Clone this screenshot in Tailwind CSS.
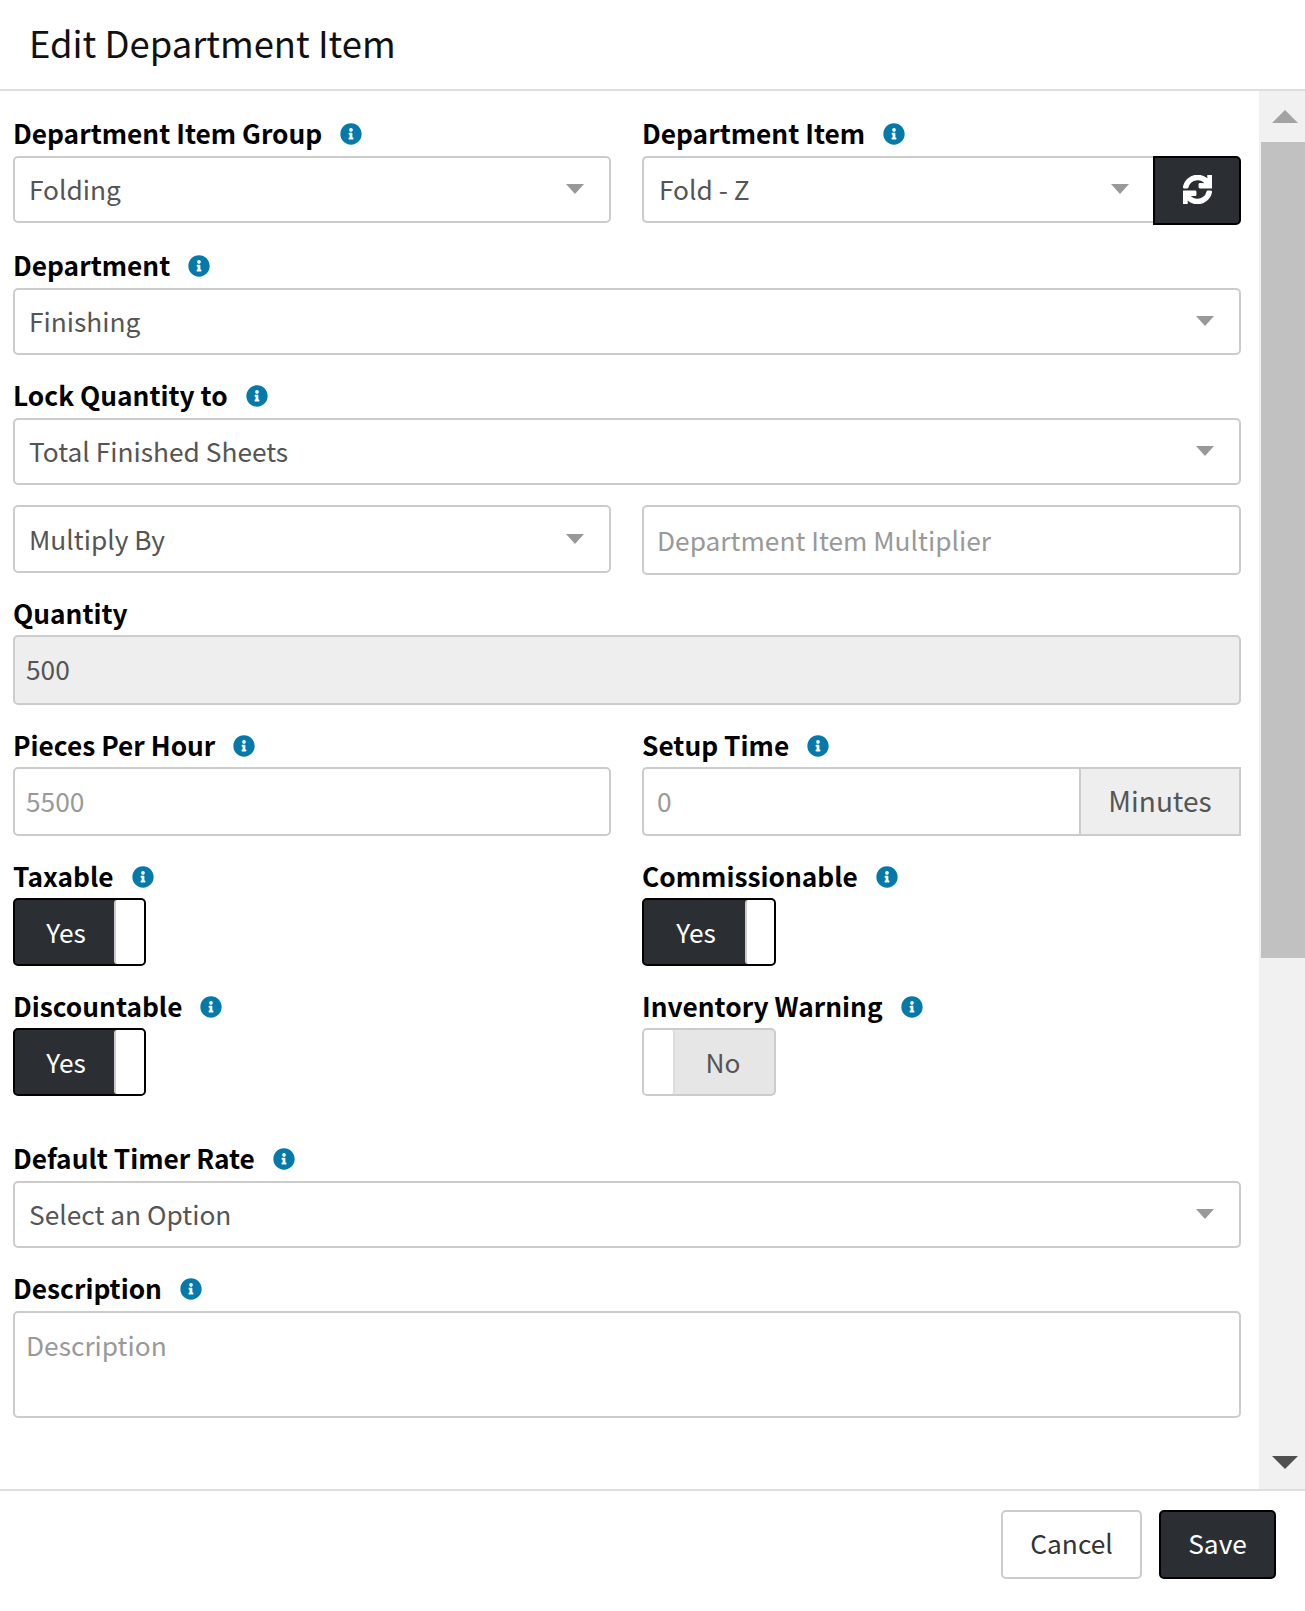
<!DOCTYPE html>
<html lang="en">
<head>
<meta charset="utf-8">
<title>Edit Department Item</title>
<script src="https://cdn.jsdelivr.net/npm/@tailwindcss/browser@4"></script>
</head>
<body class="bg-white font-['Noto_Sans_CJK_SC','Noto_Sans',sans-serif] text-[26.3px] text-black">
<div class="w-[1305px] h-[1611px] flex flex-col overflow-hidden">
  <header class="h-[91px] shrink-0 border-b-2 border-[#dedede] pl-[29px] pb-1 flex items-center">
    <h1 class="text-[36.4px] font-normal leading-none text-[#111]">Edit Department Item</h1>
  </header>
  <div class="flex-1 flex min-h-0 border-b-2 border-[#dedede]">
    <main class="w-[1259px] shrink-0 pl-[13px] pr-[18px] pt-[27px]">
      <div class="grid grid-cols-[598px_599px] gap-x-[31px]">
        <div>
          <div class="h-8 pb-[2px] flex items-center font-bold leading-none">Department Item Group<svg class="ml-[18px] mt-[2px] w-[22px] h-[22px]" viewBox="0 0 512 512" fill="#0679ab"><path d="M256 8C119.043 8 8 119.083 8 256c0 136.997 111.043 248 248 248s248-111.003 248-248C504 119.083 392.957 8 256 8zm0 110c23.196 0 42 18.804 42 42s-18.804 42-42 42-42-18.804-42-42 18.804-42 42-42zm56 254c0 6.627-5.373 12-12 12h-88c-6.627 0-12-5.373-12-12v-24c0-6.627 5.373-12 12-12h12v-64h-12c-6.627 0-12-5.373-12-12v-24c0-6.627 5.373-12 12-12h64c6.627 0 12 5.373 12 12v100h12c6.627 0 12 5.373 12 12v24z"/></svg></div>
          <div class="mt-[6px] h-[67px] border-2 border-[#ccc] rounded-[5px] pl-[14px] pr-[25px] pb-[2px] flex items-center justify-between text-[#555]"><span>Folding</span><span class="w-0 h-0 border-x-[9px] border-x-transparent border-t-[10px] border-t-[#999]"></span></div>
        </div>
        <div>
          <div class="h-8 pb-[2px] flex items-center font-bold leading-none">Department Item<svg class="ml-[18px] mt-[2px] w-[22px] h-[22px]" viewBox="0 0 512 512" fill="#0679ab"><path d="M256 8C119.043 8 8 119.083 8 256c0 136.997 111.043 248 248 248s248-111.003 248-248C504 119.083 392.957 8 256 8zm0 110c23.196 0 42 18.804 42 42s-18.804 42-42 42-42-18.804-42-42 18.804-42 42-42zm56 254c0 6.627-5.373 12-12 12h-88c-6.627 0-12-5.373-12-12v-24c0-6.627 5.373-12 12-12h12v-64h-12c-6.627 0-12-5.373-12-12v-24c0-6.627 5.373-12 12-12h64c6.627 0 12 5.373 12 12v100h12c6.627 0 12 5.373 12 12v24z"/></svg></div>
          <div class="mt-[6px] flex items-start">
            <div class="flex-1 h-[67px] border-2 border-r-0 border-[#ccc] rounded-l-[5px] pl-[15px] pr-[24px] pb-[2px] flex items-center justify-between text-[#555]"><span>Fold - Z</span><span class="w-0 h-0 border-x-[9px] border-x-transparent border-t-[10px] border-t-[#999]"></span></div>
            <button class="w-[88px] h-[69px] bg-[#2b2f33] border-2 border-black rounded-r-[5px] pb-[2px] flex items-center justify-center"><svg class="w-[29px] h-[29px]" viewBox="0 0 512 512" fill="#fff" stroke="#fff" stroke-width="26"><path d="M440.65 12.57l4 82.77A247.16 247.16 0 0 0 255.83 8C134.73 8 33.91 94.92 12.29 209.82A12 12 0 0 0 24.09 224h49.05a12 12 0 0 0 11.67-9.26 175.91 175.91 0 0 1 317-56.94l-101.46-4.86a12 12 0 0 0-12.57 12v47.41a12 12 0 0 0 12 12H500a12 12 0 0 0 12-12V12a12 12 0 0 0-12-12h-47.37a12 12 0 0 0-11.98 12.57zM255.83 432a175.61 175.61 0 0 1-146-77.8l101.8 4.87a12 12 0 0 0 12.57-12v-47.4a12 12 0 0 0-12-12H12a12 12 0 0 0-12 12V500a12 12 0 0 0 12 12h47.35a12 12 0 0 0 12-12.6l-4.15-82.57A247.17 247.17 0 0 0 255.83 504c121.11 0 221.93-86.92 243.55-201.82a12 12 0 0 0-11.8-14.18h-49.05a12 12 0 0 0-11.67 9.26A175.86 175.86 0 0 1 255.83 432z"/></svg></button>
          </div>
        </div>
      </div>

      <div class="mt-[25px] h-8 pb-[2px] flex items-center font-bold leading-none">Department<svg class="ml-[18px] mt-[2px] w-[22px] h-[22px]" viewBox="0 0 512 512" fill="#0679ab"><path d="M256 8C119.043 8 8 119.083 8 256c0 136.997 111.043 248 248 248s248-111.003 248-248C504 119.083 392.957 8 256 8zm0 110c23.196 0 42 18.804 42 42s-18.804 42-42 42-42-18.804-42-42 18.804-42 42-42zm56 254c0 6.627-5.373 12-12 12h-88c-6.627 0-12-5.373-12-12v-24c0-6.627 5.373-12 12-12h12v-64h-12c-6.627 0-12-5.373-12-12v-24c0-6.627 5.373-12 12-12h64c6.627 0 12 5.373 12 12v100h12c6.627 0 12 5.373 12 12v24z"/></svg></div>
      <div class="mt-[6px] h-[67px] border-2 border-[#ccc] rounded-[5px] pl-[14px] pr-[25px] pb-[2px] flex items-center justify-between text-[#555]"><span>Finishing</span><span class="w-0 h-0 border-x-[9px] border-x-transparent border-t-[10px] border-t-[#999]"></span></div>

      <div class="mt-[25px] h-8 pb-[2px] flex items-center font-bold leading-none">Lock Quantity to<svg class="ml-[18px] mt-[2px] w-[22px] h-[22px]" viewBox="0 0 512 512" fill="#0679ab"><path d="M256 8C119.043 8 8 119.083 8 256c0 136.997 111.043 248 248 248s248-111.003 248-248C504 119.083 392.957 8 256 8zm0 110c23.196 0 42 18.804 42 42s-18.804 42-42 42-42-18.804-42-42 18.804-42 42-42zm56 254c0 6.627-5.373 12-12 12h-88c-6.627 0-12-5.373-12-12v-24c0-6.627 5.373-12 12-12h12v-64h-12c-6.627 0-12-5.373-12-12v-24c0-6.627 5.373-12 12-12h64c6.627 0 12 5.373 12 12v100h12c6.627 0 12 5.373 12 12v24z"/></svg></div>
      <div class="mt-[6px] h-[67px] border-2 border-[#ccc] rounded-[5px] pl-[14px] pr-[25px] pb-[2px] flex items-center justify-between text-[#555]"><span>Total Finished Sheets</span><span class="w-0 h-0 border-x-[9px] border-x-transparent border-t-[10px] border-t-[#999]"></span></div>

      <div class="mt-[20px] grid grid-cols-[598px_599px] gap-x-[31px] items-start">
        <div class="h-[68px] border-2 border-[#ccc] rounded-[5px] pl-[14px] pr-[25px] flex items-center justify-between text-[#555]"><span>Multiply By</span><span class="w-0 h-0 border-x-[9px] border-x-transparent border-t-[10px] border-t-[#999]"></span></div>
        <input class="w-full h-[70px] border-2 border-[#ccc] rounded-[5px] px-[13px] pb-[2px] text-[#555] placeholder:text-[#999] outline-none" placeholder="Department Item Multiplier">
      </div>

      <div class="mt-[23px] h-8 pb-[2px] flex items-center font-bold leading-none">Quantity</div>
      <div class="mt-[5px] h-[70px] border-2 border-[#ccc] rounded-[5px] bg-[#eee] px-[11px] pb-[3px] flex items-center text-[#555]">500</div>

      <div class="mt-[25px] grid grid-cols-[598px_599px] gap-x-[31px]">
        <div>
          <div class="h-8 pb-[2px] flex items-center font-bold leading-none">Pieces Per Hour<svg class="ml-[18px] mt-[2px] w-[22px] h-[22px]" viewBox="0 0 512 512" fill="#0679ab"><path d="M256 8C119.043 8 8 119.083 8 256c0 136.997 111.043 248 248 248s248-111.003 248-248C504 119.083 392.957 8 256 8zm0 110c23.196 0 42 18.804 42 42s-18.804 42-42 42-42-18.804-42-42 18.804-42 42-42zm56 254c0 6.627-5.373 12-12 12h-88c-6.627 0-12-5.373-12-12v-24c0-6.627 5.373-12 12-12h12v-64h-12c-6.627 0-12-5.373-12-12v-24c0-6.627 5.373-12 12-12h64c6.627 0 12 5.373 12 12v100h12c6.627 0 12 5.373 12 12v24z"/></svg></div>
          <input class="mt-[5px] w-full h-[69px] border-2 border-[#ccc] rounded-[5px] px-[11px] pb-[2px] text-[#555] placeholder:text-[#999] outline-none" placeholder="5500">
        </div>
        <div>
          <div class="h-8 pb-[2px] flex items-center font-bold leading-none">Setup Time<svg class="ml-[18px] mt-[2px] w-[22px] h-[22px]" viewBox="0 0 512 512" fill="#0679ab"><path d="M256 8C119.043 8 8 119.083 8 256c0 136.997 111.043 248 248 248s248-111.003 248-248C504 119.083 392.957 8 256 8zm0 110c23.196 0 42 18.804 42 42s-18.804 42-42 42-42-18.804-42-42 18.804-42 42-42zm56 254c0 6.627-5.373 12-12 12h-88c-6.627 0-12-5.373-12-12v-24c0-6.627 5.373-12 12-12h12v-64h-12c-6.627 0-12-5.373-12-12v-24c0-6.627 5.373-12 12-12h64c6.627 0 12 5.373 12 12v100h12c6.627 0 12 5.373 12 12v24z"/></svg></div>
          <div class="mt-[5px] flex h-[69px]">
            <input class="flex-1 min-w-0 border-2 border-r-0 border-[#ccc] rounded-l-[5px] px-[13px] pb-[2px] text-[#555] placeholder:text-[#999] outline-none" placeholder="0">
            <div class="w-[162px] border-2 border-[#ccc] bg-[#eee] pb-[4px] flex items-center justify-center text-[28px] text-[#555]">Minutes</div>
          </div>
        </div>
      </div>

      <div class="mt-[25px] grid grid-cols-[598px_599px] gap-x-[31px] gap-y-[25px]">
        <div>
          <div class="h-8 pb-[2px] flex items-center font-bold leading-none">Taxable<svg class="ml-[18px] mt-[2px] w-[22px] h-[22px]" viewBox="0 0 512 512" fill="#0679ab"><path d="M256 8C119.043 8 8 119.083 8 256c0 136.997 111.043 248 248 248s248-111.003 248-248C504 119.083 392.957 8 256 8zm0 110c23.196 0 42 18.804 42 42s-18.804 42-42 42-42-18.804-42-42 18.804-42 42-42zm56 254c0 6.627-5.373 12-12 12h-88c-6.627 0-12-5.373-12-12v-24c0-6.627 5.373-12 12-12h12v-64h-12c-6.627 0-12-5.373-12-12v-24c0-6.627 5.373-12 12-12h64c6.627 0 12 5.373 12 12v100h12c6.627 0 12 5.373 12 12v24z"/></svg></div>
          <div class="mt-[5px] w-[133px] h-[68px] border-2 border-black rounded-[5px] bg-[#2b2f33] flex overflow-hidden"><span class="w-[99px] pl-[3px] flex items-center justify-center text-white">Yes</span><span class="flex-1 bg-white border-l-2 border-[#ccc] rounded-l-[3px]"></span></div>
        </div>
        <div>
          <div class="h-8 pb-[2px] flex items-center font-bold leading-none">Commissionable<svg class="ml-[18px] mt-[2px] w-[22px] h-[22px]" viewBox="0 0 512 512" fill="#0679ab"><path d="M256 8C119.043 8 8 119.083 8 256c0 136.997 111.043 248 248 248s248-111.003 248-248C504 119.083 392.957 8 256 8zm0 110c23.196 0 42 18.804 42 42s-18.804 42-42 42-42-18.804-42-42 18.804-42 42-42zm56 254c0 6.627-5.373 12-12 12h-88c-6.627 0-12-5.373-12-12v-24c0-6.627 5.373-12 12-12h12v-64h-12c-6.627 0-12-5.373-12-12v-24c0-6.627 5.373-12 12-12h64c6.627 0 12 5.373 12 12v100h12c6.627 0 12 5.373 12 12v24z"/></svg></div>
          <div class="mt-[5px] w-[134px] h-[68px] border-2 border-black rounded-[5px] bg-[#2b2f33] flex overflow-hidden"><span class="w-[101px] pl-[3px] flex items-center justify-center text-white">Yes</span><span class="flex-1 bg-white border-l-2 border-[#ccc] rounded-l-[3px]"></span></div>
        </div>
        <div>
          <div class="h-8 pb-[2px] flex items-center font-bold leading-none">Discountable<svg class="ml-[18px] mt-[2px] w-[22px] h-[22px]" viewBox="0 0 512 512" fill="#0679ab"><path d="M256 8C119.043 8 8 119.083 8 256c0 136.997 111.043 248 248 248s248-111.003 248-248C504 119.083 392.957 8 256 8zm0 110c23.196 0 42 18.804 42 42s-18.804 42-42 42-42-18.804-42-42 18.804-42 42-42zm56 254c0 6.627-5.373 12-12 12h-88c-6.627 0-12-5.373-12-12v-24c0-6.627 5.373-12 12-12h12v-64h-12c-6.627 0-12-5.373-12-12v-24c0-6.627 5.373-12 12-12h64c6.627 0 12 5.373 12 12v100h12c6.627 0 12 5.373 12 12v24z"/></svg></div>
          <div class="mt-[5px] w-[133px] h-[68px] border-2 border-black rounded-[5px] bg-[#2b2f33] flex overflow-hidden"><span class="w-[99px] pl-[3px] flex items-center justify-center text-white">Yes</span><span class="flex-1 bg-white border-l-2 border-[#ccc] rounded-l-[3px]"></span></div>
        </div>
        <div>
          <div class="h-8 pb-[2px] flex items-center font-bold leading-none">Inventory Warning<svg class="ml-[18px] mt-[2px] w-[22px] h-[22px]" viewBox="0 0 512 512" fill="#0679ab"><path d="M256 8C119.043 8 8 119.083 8 256c0 136.997 111.043 248 248 248s248-111.003 248-248C504 119.083 392.957 8 256 8zm0 110c23.196 0 42 18.804 42 42s-18.804 42-42 42-42-18.804-42-42 18.804-42 42-42zm56 254c0 6.627-5.373 12-12 12h-88c-6.627 0-12-5.373-12-12v-24c0-6.627 5.373-12 12-12h12v-64h-12c-6.627 0-12-5.373-12-12v-24c0-6.627 5.373-12 12-12h64c6.627 0 12 5.373 12 12v100h12c6.627 0 12 5.373 12 12v24z"/></svg></div>
          <div class="mt-[5px] w-[134px] h-[68px] border-2 border-[#ccc] rounded-[5px] bg-[#e6e6e6] flex overflow-hidden"><span class="w-[31px] bg-white border-r-2 border-[#ddd] rounded-r-[3px]"></span><span class="flex-1 pr-[3px] flex items-center justify-center text-[#555]">No</span></div>
        </div>
      </div>

      <div class="mt-[47px] h-8 pb-[2px] flex items-center font-bold leading-none">Default Timer Rate<svg class="ml-[18px] mt-[2px] w-[22px] h-[22px]" viewBox="0 0 512 512" fill="#0679ab"><path d="M256 8C119.043 8 8 119.083 8 256c0 136.997 111.043 248 248 248s248-111.003 248-248C504 119.083 392.957 8 256 8zm0 110c23.196 0 42 18.804 42 42s-18.804 42-42 42-42-18.804-42-42 18.804-42 42-42zm56 254c0 6.627-5.373 12-12 12h-88c-6.627 0-12-5.373-12-12v-24c0-6.627 5.373-12 12-12h12v-64h-12c-6.627 0-12-5.373-12-12v-24c0-6.627 5.373-12 12-12h64c6.627 0 12 5.373 12 12v100h12c6.627 0 12 5.373 12 12v24z"/></svg></div>
      <div class="mt-[6px] h-[67px] border-2 border-[#ccc] rounded-[5px] pl-[14px] pr-[25px] pb-[1px] flex items-center justify-between text-[#555]"><span>Select an Option</span><span class="w-0 h-0 border-x-[9px] border-x-transparent border-t-[10px] border-t-[#999]"></span></div>

      <div class="mt-[25px] h-8 pb-[2px] flex items-center font-bold leading-none">Description<svg class="ml-[18px] mt-[2px] w-[22px] h-[22px]" viewBox="0 0 512 512" fill="#0679ab"><path d="M256 8C119.043 8 8 119.083 8 256c0 136.997 111.043 248 248 248s248-111.003 248-248C504 119.083 392.957 8 256 8zm0 110c23.196 0 42 18.804 42 42s-18.804 42-42 42-42-18.804-42-42 18.804-42 42-42zm56 254c0 6.627-5.373 12-12 12h-88c-6.627 0-12-5.373-12-12v-24c0-6.627 5.373-12 12-12h12v-64h-12c-6.627 0-12-5.373-12-12v-24c0-6.627 5.373-12 12-12h64c6.627 0 12 5.373 12 12v100h12c6.627 0 12 5.373 12 12v24z"/></svg></div>
      <textarea class="block mt-[6px] w-full h-[107px] resize-none border-2 border-[#ccc] rounded-[5px] px-[11px] py-[14px] leading-[36px] text-[#555] placeholder:text-[#999] outline-none" placeholder="Description"></textarea>
    </main>
    <aside class="w-[46px] shrink-0 bg-[#f1f1f1] flex flex-col">
      <div class="h-[51px] flex justify-center pl-[5px] pt-[19px]"><span class="w-0 h-0 border-x-[13px] border-x-transparent border-b-[13px] border-b-[#a3a3a3]"></span></div>
      <div class="h-[816px] ml-[2px] bg-[#c1c1c1]"></div>
      <div class="flex-1 flex justify-center items-end pl-[5px] pb-[20px]"><span class="w-0 h-0 border-x-[13px] border-x-transparent border-t-[13px] border-t-[#505050]"></span></div>
    </aside>
  </div>
  <footer class="h-[120px] shrink-0 flex justify-end items-start gap-[17px] pt-[19px] pr-[29px]">
    <button class="w-[141px] h-[69px] border-2 border-[#ccc] rounded-[5px] bg-white pb-[4px] text-[#333]">Cancel</button>
    <button class="w-[117px] h-[69px] border-2 border-black rounded-[5px] bg-[#2b2f33] pb-[4px] text-white">Save</button>
  </footer>
</div>
</body>
</html>
